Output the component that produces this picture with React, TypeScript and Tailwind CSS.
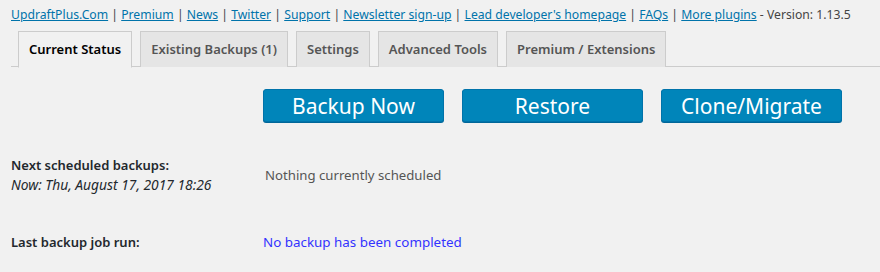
const links = [
  "UpdraftPlus.Com",
  "Premium",
  "News",
  "Twitter",
  "Support",
  "Newsletter sign-up",
  "Lead developer's homepage",
  "FAQs",
  "More plugins",
];

const tabs = [
  "Current Status",
  "Existing Backups (1)",
  "Settings",
  "Advanced Tools",
  "Premium / Extensions",
];

const font = { fontFamily: '"Noto Sans", "Open Sans", sans-serif' };

export default function App() {
  return (
    <div
      className="w-[880px] h-[272px] overflow-hidden bg-[#f1f1f1] text-[#444]"
      style={font}
    >
      {/* plugin links */}
      <div className="pl-[11px] pt-[6px] h-[31px] text-[12.2px] leading-[18px] whitespace-nowrap">
        {links.map((l, i) => (
          <span key={l}>
            {i > 0 && <span> | </span>}
            <a href="#" className="text-[#0073aa] underline">
              {l}
            </a>
          </span>
        ))}
        <span> - Version: 1.13.5</span>
      </div>

      {/* tabs */}
      <div className="ml-[11px] flex border-b border-[#ccc] pl-[7px] gap-[8px] h-[36px]">
        {tabs.map((t, i) => (
          <div
            key={t}
            className={
              i === 0
                ? "px-[10px] pt-[5px] h-[37px] border border-[#ccc] border-b-[#f1f1f1] bg-[#f1f1f1] text-[13px] leading-[24px] font-semibold text-black"
                : "px-[10px] pt-[5px] h-[36px] border border-[#ccc] border-b-0 bg-[#e5e5e5] text-[13px] leading-[24px] font-semibold text-[#555]"
            }
          >
            {t}
          </div>
        ))}
      </div>

      <div className="ml-[11px] grid grid-cols-[252px_1fr]">
        {/* action buttons */}
        <div />
        <div className="flex gap-[18px] pt-[22px]">
          {["Backup Now", "Restore", "Clone/Migrate"].map((b) => (
            <button
              key={b}
              className="w-[181px] h-[33px] rounded-[3px] bg-[#0085ba] border border-[#0073aa] shadow-[0_1px_0_#006799] text-white text-[21px] leading-[30px]"
            >
              {b}
            </button>
          ))}
        </div>

        {/* next scheduled */}
        <div className="pt-[34px] text-[13px] leading-[19px] text-[#23282d]">
          <div className="font-semibold">Next scheduled backups:</div>
          <div className="italic text-[13.8px]">Now: Thu, August 17, 2017 18:26</div>
        </div>
        <div className="pt-[44px] pl-[2px] text-[13.2px] leading-[19px] text-[#555]">
          Nothing currently scheduled
        </div>

        {/* last job */}
        <div className="pt-[39px] text-[13px] leading-[19px] font-semibold text-[#23282d]">
          Last backup job run:
        </div>
        <div className="pt-[39px] text-[13.4px] leading-[19px] text-[#3333ff]">
          No backup has been completed
        </div>
      </div>
    </div>
  );
}
